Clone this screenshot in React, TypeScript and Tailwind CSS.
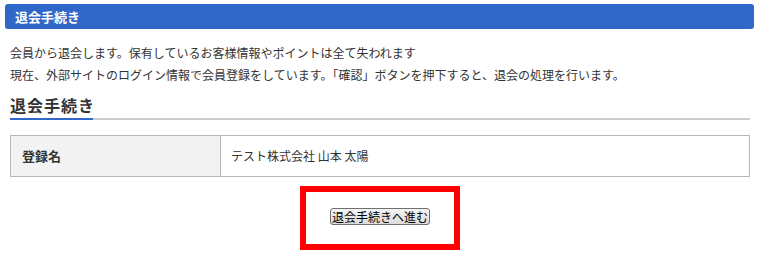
import React from 'react';

const App: React.FC = () => {
  return (
    <div
      className="w-[767px] h-[259px] bg-white text-[#333] overflow-hidden"
      style={{ fontFamily: '"Noto Sans CJK JP", "Noto Sans", sans-serif' }}
    >
      <div className="ml-[5px] mt-[4px] w-[749px] h-[25px] rounded-[3px] bg-[#3068c9] text-white font-bold text-[13px] pl-[10px] flex items-center">
        退会手続き
      </div>

      <div className="pl-[10px] pr-[17px]">
        <div className="mt-[13px] text-[12px] leading-[22px]">
          <p>会員から退会します。保有しているお客様情報やポイントは全て失われます</p>
          <p>現在、外部サイトのログイン情報で会員登録をしています。「確認」ボタンを押下すると、退会の処理を行います。</p>
        </div>

        {/* 見出し */}
        <div className="mt-[6px]">
          <h3 className="text-[16px] font-bold leading-[26px] tracking-[1px]">退会手続き</h3>
          <div className="h-[2px] bg-[#cccccc] flex">
            <div className="w-[83px] h-full bg-[#3068c9]" />
          </div>
        </div>

        <div className="mt-[15px] border border-[#b7b7b7] flex h-[42px] text-[12px]">
          <div className="w-[210px] bg-[#f2f2f2] border-r border-[#b7b7b7] flex items-center pl-[11px] font-bold text-[13px]">
            登録名
          </div>
          <div className="flex-1 flex items-center pl-[10px] whitespace-pre">テスト株式会社 山本 太陽</div>
        </div>

        <div className="mt-[9px] flex justify-center">
          <div className="w-[160px] h-[64px] border-[6px] border-[#ff0000] flex justify-center pt-[16px]">
            <button className="h-[17px] px-[1px] text-[12px] leading-[15px] text-black border border-[#707070] rounded-[3px] bg-gradient-to-b from-[#f4f4f4] to-[#dcdcdc]">
              退会手続きへ進む
            </button>
          </div>
        </div>
      </div>
    </div>
  );
};

export default App;
